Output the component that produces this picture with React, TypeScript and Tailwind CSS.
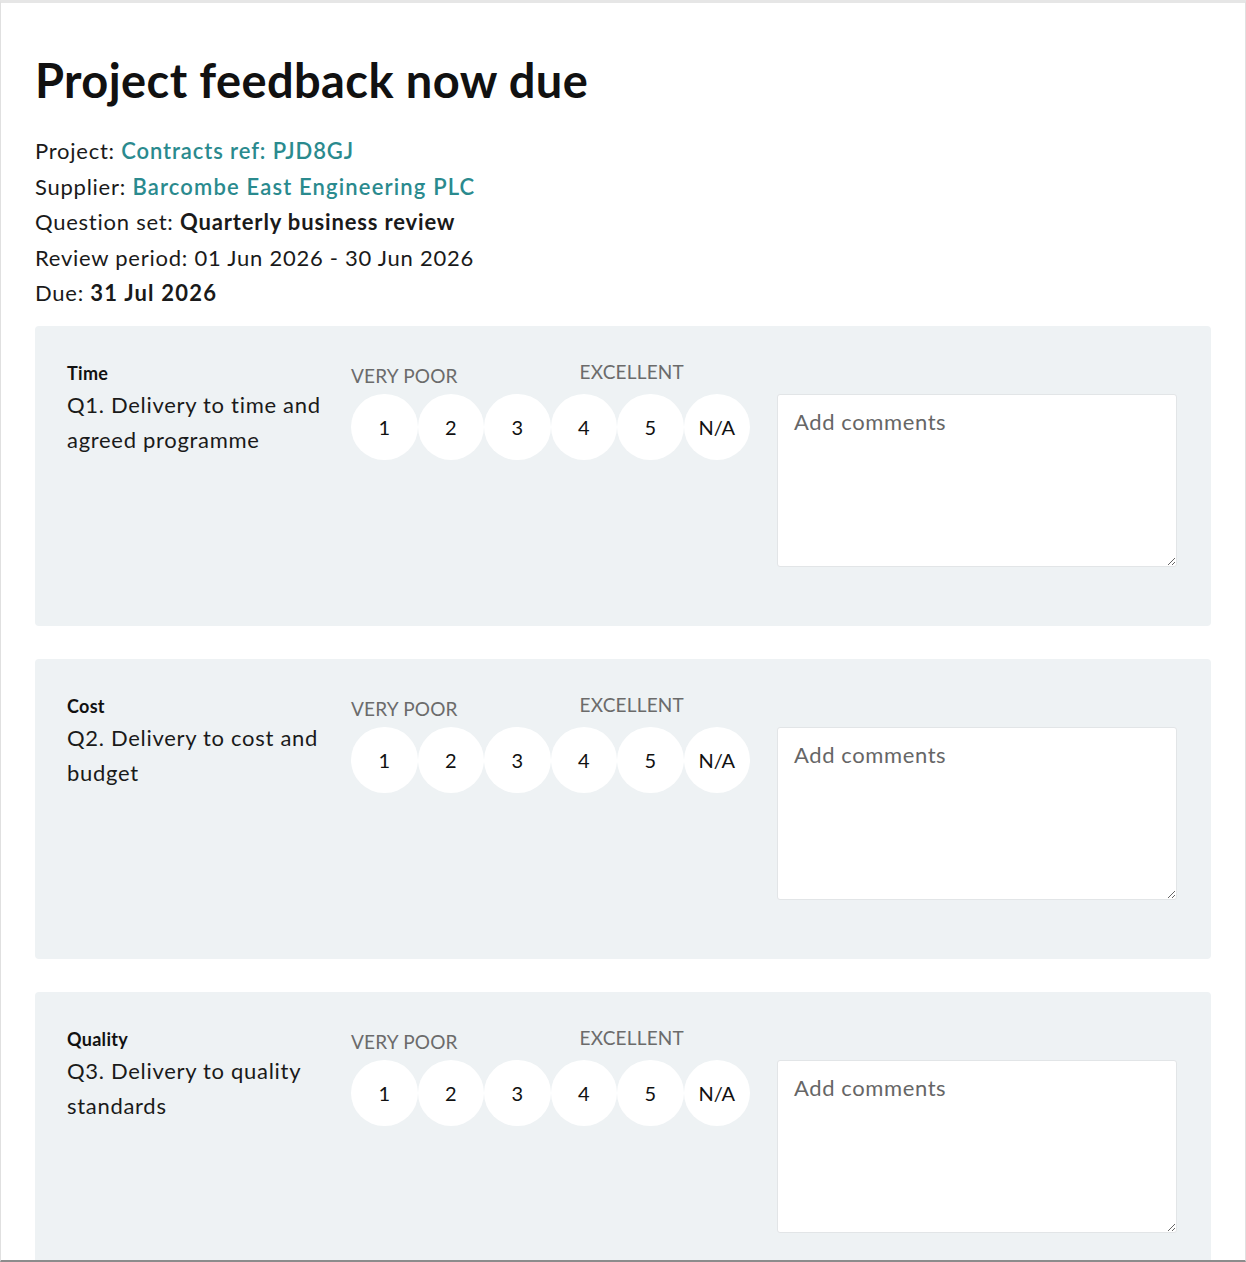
import React from 'react';

interface Question {
  id: number;
  category: string;
  text: string;
}

const questions: Question[] = [
  { id: 1, category: 'Time', text: 'Q1. Delivery to time and agreed programme' },
  { id: 2, category: 'Cost', text: 'Q2. Delivery to cost and budget' },
  { id: 3, category: 'Quality', text: 'Q3. Delivery to quality standards' },
];

const ratings = ['1', '2', '3', '4', '5', 'N/A'];

const QuestionCard = ({ question }: { question: Question }) => {
  return (
    <div className="h-[300px] shrink-0 bg-[#eef2f4] rounded-[4px] pt-[33px] pl-[32px] pr-[34px] flex mb-[33px]">
      <div className="w-[284px] shrink-0">
        <div className="text-[18px] leading-[28px] font-bold text-[#111] tracking-[0.3px]">{question.category}</div>
        <div className="text-[22px] leading-[35px] text-[#1a1a1a] tracking-[0.7px] pr-[4px]">{question.text}</div>
      </div>
      <div className="w-[400px] shrink-0">
        <div className="h-[35px] w-[333px] flex justify-between text-[19px] leading-[24px] text-[#6b6b6b] uppercase tracking-[0.2px]">
          <span className="pt-[5px]">Very poor</span>
          <span className="pt-[1px]">Excellent</span>
        </div>
        <div className="flex">
          {ratings.map((r) => (
            <button
              key={r}
              className="w-[66.5px] h-[66px] shrink-0 rounded-full bg-white flex items-center justify-center text-[20px] text-[#111]"
            >
              {r}
            </button>
          ))}
        </div>
      </div>
      <div className="flex-1 pt-[35px] pl-[26px]">
        <textarea
          placeholder="Add comments"
          className="w-full h-[173px] bg-white border border-[#e2e5e7] rounded-[3px] px-[16px] pt-[12px] text-[22px] leading-[30px] tracking-[0.6px] text-[#222] placeholder:text-[#666] outline-none"
        />
      </div>
    </div>
  );
};

const App = () => {
  return (
    <div className="h-[1262px] overflow-hidden bg-white border-x border-[#e0e0e0] border-t-[3px] border-t-[#e6e6e6] border-b-2 border-b-[#8c8c8c] font-['Lato','Liberation_Sans',sans-serif]">
      <div className="pl-[34px] pr-[34px]">
        <h1 className="pt-[49px] text-[47px] leading-[1.2] font-bold text-[#111] tracking-[0.4px]">
          Project feedback now due
        </h1>
        <div className="mt-[25px] text-[22px] leading-[35.5px] text-[#1a1a1a] tracking-[0.75px]">
          <p>
            Project: <a href="#" className="text-[#2a8a8e] font-semibold tracking-[0.9px]">Contracts ref: PJD8GJ</a>
          </p>
          <p>
            Supplier: <a href="#" className="text-[#2a8a8e] font-semibold tracking-[1.15px]">Barcombe East Engineering PLC</a>
          </p>
          <p>
            Question set: <span className="font-bold tracking-[0.85px]">Quarterly business review</span>
          </p>
          <p>Review period: 01 Jun 2026 - 30 Jun 2026</p>
          <p>
            Due: <span className="font-bold tracking-[1.2px]">31 Jul 2026</span>
          </p>
        </div>
        <div className="mt-[15px] flex flex-col">
          {questions.map((q) => (
            <QuestionCard key={q.id} question={q} />
          ))}
        </div>
      </div>
    </div>
  );
};

export default App;
